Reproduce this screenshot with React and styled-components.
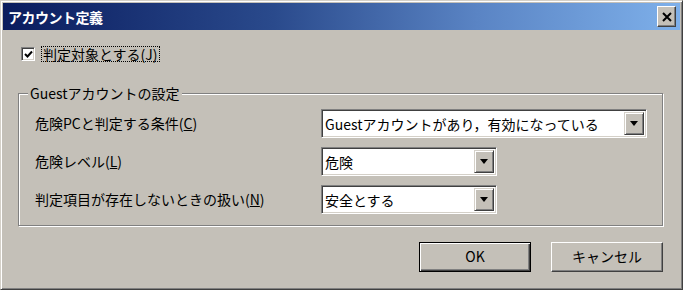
import styled, { createGlobalStyle } from "styled-components";

const GlobalStyle = createGlobalStyle`
  html, body {
    margin: 0;
    padding: 0;
    background: #c4c0b8;
  }
  body {
    font-family: "Noto Sans CJK JP", "Liberation Sans", sans-serif;
    font-size: 14px;
    color: #000;
  }
`;

const Window = styled.div`
  width: 683px;
  height: 290px;
  box-sizing: border-box;
  background: #c4c0b8;
  border: 1px solid;
  border-color: #d4d0c8 #404040 #404040 #d4d0c8;
  box-shadow: inset 1px 1px 0 #fff, inset -1px -1px 0 #808080;
  padding: 2px;
  display: flex;
  flex-direction: column;
`;

const TitleBar = styled.div`
  height: 27px;
  flex: none;
  display: flex;
  align-items: center;
  justify-content: space-between;
  padding: 0 4px 0 5px;
  background: linear-gradient(to right, #0a1c5e 0%, #2a4a8c 40%, #5a84c4 70%, #7eb0ea 100%);
`;

const Title = styled.div`
  color: #fff;
  font-weight: bold;
  font-size: 14px;
  letter-spacing: -0.5px;
`;

const CloseButton = styled.div`
  width: 19px;
  height: 21px;
  box-sizing: border-box;
  background: #c4c0b8;
  border: 1px solid;
  border-color: #fff #404040 #404040 #fff;
  box-shadow: inset -1px -1px 0 #808080;
  display: flex;
  align-items: center;
  justify-content: center;
`;

const Body = styled.div`
  flex: 1;
  display: flex;
  flex-direction: column;
  padding: 16px 17px 0 15px;
`;

const CheckRow = styled.label`
  display: flex;
  align-items: center;
  height: 16px;
  padding-left: 3px;
  gap: 6px;
`;

const CheckBox = styled.div`
  width: 14px;
  height: 14px;
  box-sizing: border-box;
  background: #fff;
  border: 1px solid;
  border-color: #808080 #fff #fff #808080;
  box-shadow: inset 1px 1px 0 #404040, inset -1px -1px 0 #d4d0c8;
  display: flex;
  align-items: center;
  justify-content: center;
`;

const FocusText = styled.span`
  border: 1px dotted #000;
  padding: 0 1px;
  line-height: 14px;
`;

const Group = styled.fieldset`
  margin: 23px 0 0 0;
  padding: 8px 15px 11px 16px;
  border: 1px solid #808080;
  box-shadow: inset 1px 1px 0 #fff, 1px 1px 0 #fff;
  min-width: 0;
`;

const Legend = styled.legend`
  padding: 0 3px 0 2px;
  margin-left: -7px;
  line-height: 16px;
  background: #c4c0b8;
`;

const Rows = styled.div`
  display: grid;
  grid-template-columns: 286px 1fr;
  row-gap: 9px;
  align-items: center;
`;

const Label = styled.div`
  line-height: 29px;
`;

const Combo = styled.div`
  width: ${(p) => p.w}px;
  height: 29px;
  box-sizing: border-box;
  background: #fff;
  border: 1px solid;
  border-color: #808080 #fff #fff #808080;
  box-shadow: inset 1px 1px 0 #404040, inset -1px -1px 0 #d4d0c8;
  padding: 2px 2px 2px 3px;
  display: flex;
  align-items: center;
`;

const ComboText = styled.div`
  flex: 1;
  white-space: nowrap;
  overflow: hidden;
`;

const DropButton = styled.div`
  width: 20px;
  height: 100%;
  box-sizing: border-box;
  background: #c4c0b8;
  border: 1px solid;
  border-color: #d4d0c8 #404040 #404040 #d4d0c8;
  box-shadow: inset 1px 1px 0 #fff, inset -1px -1px 0 #808080;
  display: flex;
  align-items: center;
  justify-content: center;
`;

const ButtonRow = styled.div`
  display: flex;
  justify-content: flex-end;
  gap: 20px;
  margin-top: 16px;
`;

const Button = styled.div`
  width: 112px;
  height: 30px;
  box-sizing: border-box;
  background: #c4c0b8;
  border: 1px solid;
  border-color: ${(p) => (p.primary ? "#000" : "#fff #404040 #404040 #fff")};
  box-shadow: ${(p) =>
    p.primary
      ? "inset 1px 1px 0 #fff, inset -1px -1px 0 #404040, inset -2px -2px 0 #808080"
      : "inset -1px -1px 0 #808080"};
  display: flex;
  align-items: center;
  justify-content: center;
  padding-bottom: 2px;
`;

const Mn = styled.span`
  text-decoration: underline;
`;

const Arrow = () => (
  <svg width="8" height="5" viewBox="0 0 8 5">
    <path d="M0 0h8L4 5z" fill="#000" />
  </svg>
);

const Select = ({ w, value }) => (
  <Combo w={w}>
    <ComboText>{value}</ComboText>
    <DropButton>
      <Arrow />
    </DropButton>
  </Combo>
);

export default function App() {
  return (
    <>
      <GlobalStyle />
      <Window>
        <TitleBar>
          <Title>アカウント定義</Title>
          <CloseButton>
            <svg width="10" height="10" viewBox="0 0 10 10">
              <path d="M1 1L9 9M9 1L1 9" stroke="#000" strokeWidth="2" />
            </svg>
          </CloseButton>
        </TitleBar>
        <Body>
          <CheckRow>
            <CheckBox>
              <svg width="9" height="9" viewBox="0 0 9 9">
                <path d="M1 4l2.5 2.5L8 1.5" stroke="#000" strokeWidth="2" fill="none" />
              </svg>
            </CheckBox>
            <FocusText>判定対象とする(J)</FocusText>
          </CheckRow>
          <Group>
            <Legend>Guestアカウントの設定</Legend>
            <Rows>
              <Label>
                危険PCと判定する条件(<Mn>C</Mn>)
              </Label>
              <Select w={326} value="Guestアカウントがあり，有効になっている" />
              <Label>
                危険レベル(<Mn>L</Mn>)
              </Label>
              <Select w={176} value="危険" />
              <Label>
                判定項目が存在しないときの扱い(<Mn>N</Mn>)
              </Label>
              <Select w={176} value="安全とする" />
            </Rows>
          </Group>
          <ButtonRow>
            <Button primary>OK</Button>
            <Button>キャンセル</Button>
          </ButtonRow>
        </Body>
      </Window>
    </>
  );
}
